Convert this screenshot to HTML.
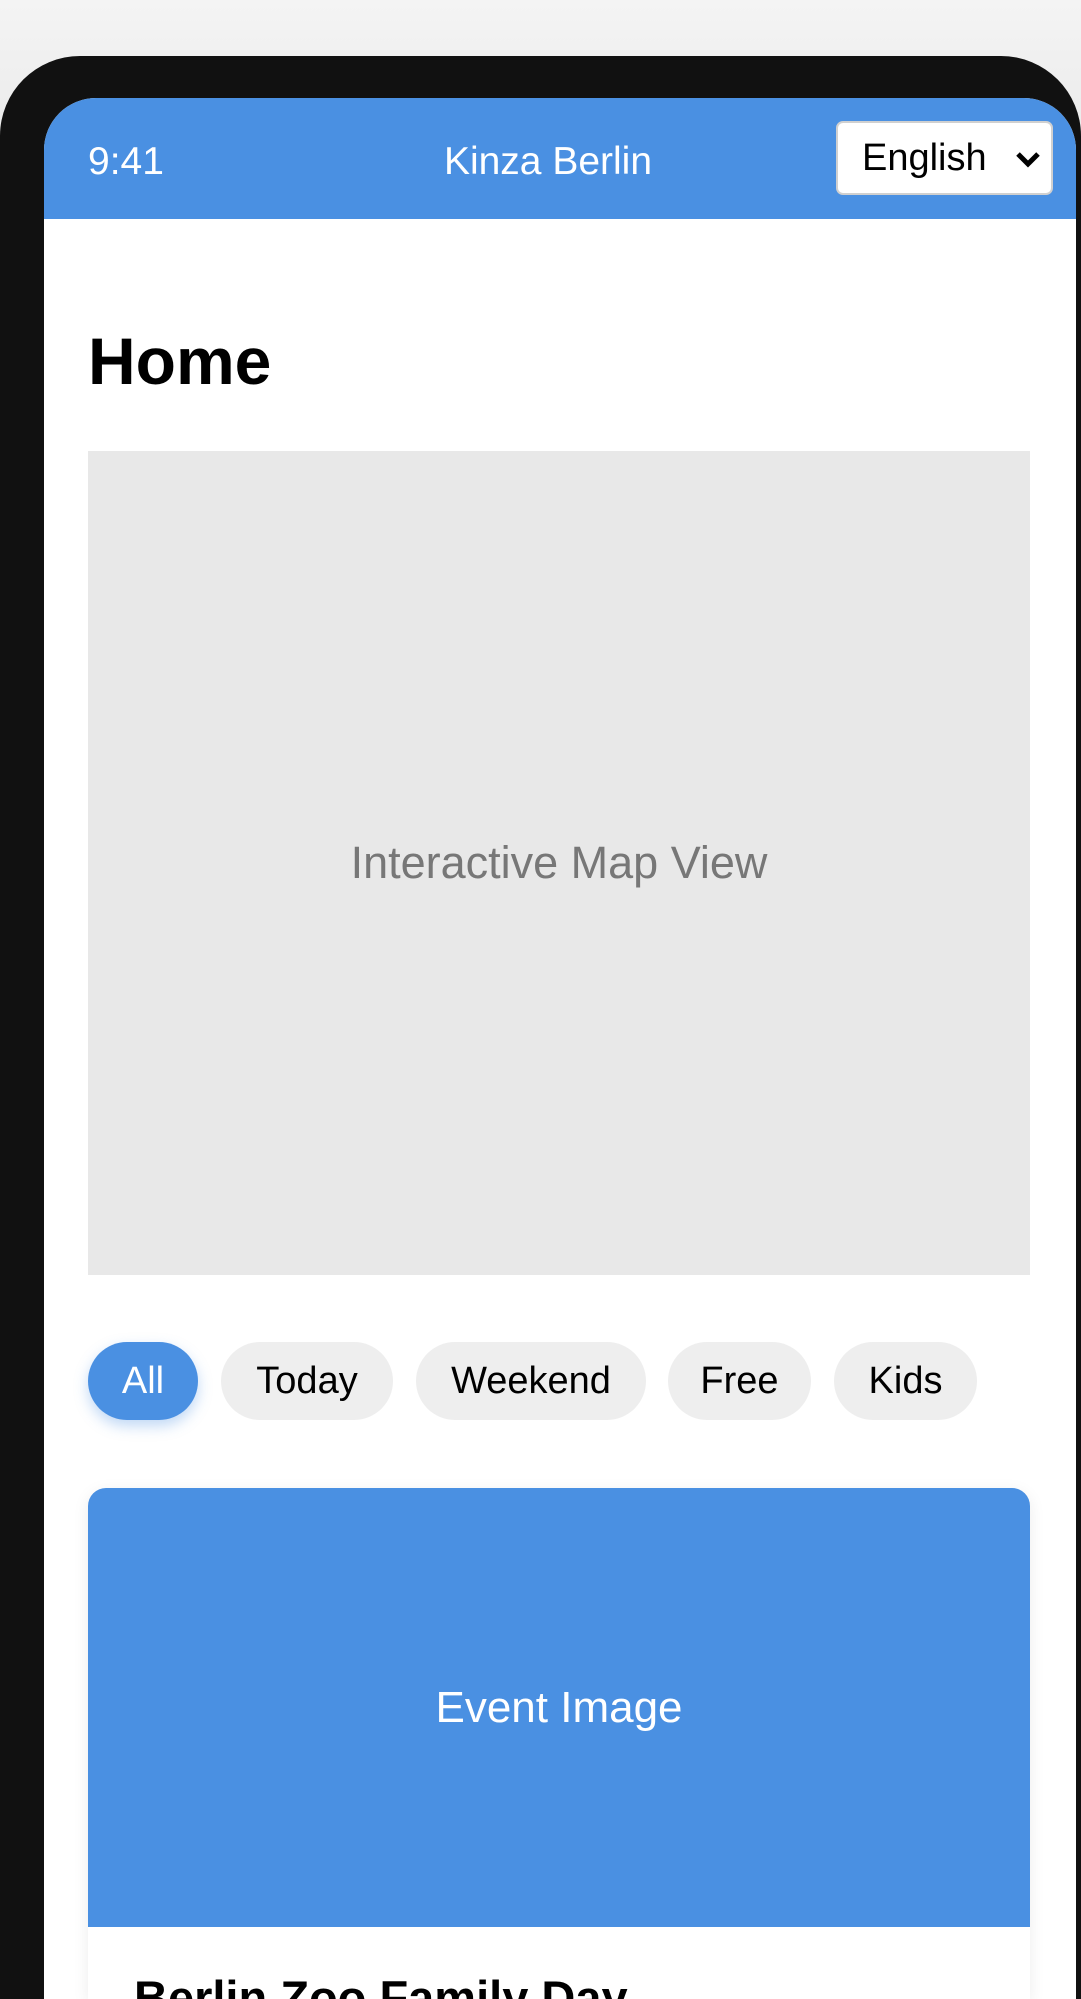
<!DOCTYPE html>
<html><head><meta charset="utf-8"><style>
*{margin:0;padding:0;box-sizing:border-box}
html,body{width:1081px;height:1999px;overflow:hidden}
body{background:linear-gradient(#f4f4f4,#ececec 120px,#e6e6e6);font-family:"Liberation Sans",Arial,sans-serif;position:relative}
.frame{position:absolute;left:0;top:56px;width:1081px;height:1943px;background:#111;border-radius:80px 80px 0 0}
.screen{position:absolute;left:44px;top:98px;width:1032px;height:1901px;background:#fff;border-radius:52px 52px 0 0;overflow:hidden}
.hdr{position:absolute;left:0;top:0;width:1032px;height:121px;background:#4a90e2;color:#fff;font-size:39px}
.t{position:absolute;left:44px;top:42px}
.ttl{position:absolute;left:0;width:1032px;text-align:center;top:42px;padding-right:24px}
.sel{position:absolute;left:792px;top:23px;width:217px;height:74px;background:#fff;border:2px solid #d0d0d0;border-radius:7px;color:#000;font-size:38px;padding:14px 0 0 24px}
.sel svg{position:absolute;right:10px;top:28px}
h1{position:absolute;left:44px;top:225px;font-size:66px;font-weight:bold}
.map{position:absolute;left:44px;top:353px;width:942px;height:824px;background:#e8e8e8;color:#777;font-size:45px;display:flex;align-items:center;justify-content:center}
.chip{position:absolute;top:1244px;height:78px;border-radius:39px;background:#eee;font-size:38px;display:flex;align-items:center;justify-content:center;color:#000}
.chip.a{background:#4a90e2;color:#fff;box-shadow:0 6px 14px rgba(74,144,226,.35)}
.card{position:absolute;left:44px;top:1390px;width:942px;height:511px;border-radius:18px 18px 0 0;overflow:hidden;box-shadow:0 4px 16px rgba(0,0,0,.08);background:#fff}
.img{height:439px;background:#4a90e2;color:#fff;font-size:44px;display:flex;align-items:center;justify-content:center}
.ct{position:absolute;left:46px;top:482px;font-size:47px;font-weight:bold;white-space:nowrap}
</style></head><body>
<div class="frame"></div>
<div class="screen">
 <div class="hdr">
  <div class="t">9:41</div>
  <div class="ttl">Kinza Berlin</div>
  <div class="sel">English<svg width="26" height="18" viewBox="0 0 26 18"><path d="M3 3 L13 13 L23 3" stroke="#000" stroke-width="5" fill="none"/></svg></div>
 </div>
 <h1>Home</h1>
 <div class="map">Interactive Map View</div>
 <div class="chip a" style="left:44px;width:110px">All</div>
 <div class="chip" style="left:177px;width:172px">Today</div>
 <div class="chip" style="left:372px;width:230px">Weekend</div>
 <div class="chip" style="left:624px;width:143px">Free</div>
 <div class="chip" style="left:790px;width:143px">Kids</div>
 <div class="card"><div class="img">Event Image</div><div class="ct">Berlin Zoo Family Day</div></div>
</div>
</body></html>
